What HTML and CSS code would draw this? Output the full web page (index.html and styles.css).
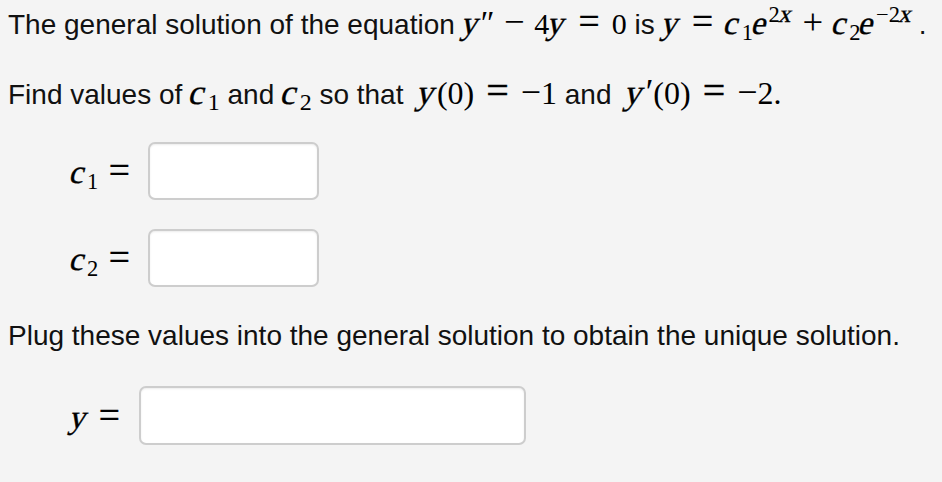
FILE: index.html
```html
<!DOCTYPE html>
<html lang="en">
<head>
<meta charset="utf-8">
<title>Initial value problem</title>
<link rel="stylesheet" href="styles.css">
</head>
<body>
<div class="page">
  <p class="txt l1">The general solution of the equation <span class="m"><span class="v">y</span><span class="pr">″</span><span class="op">−</span>4<span class="v">y</span><span class="rel">=</span>0</span> is <span class="m"><span class="v">y</span><span class="rel">=</span><span class="v">c</span><sub>1</sub><span class="v">e</span><sup>2<span class="v">x</span></sup><span class="op">+</span><span class="v">c</span><sub>2</sub><span class="v">e</span><sup>−2<span class="v">x</span></sup></span>&#8201;.</p>
  <p class="txt l2">Find values of <span class="m m2"><span class="v">c</span><sub>1</sub></span> and <span class="m m2"><span class="v">c</span><sub>2</sub></span> so that <span class="m m2 mx"><span class="v">y</span>(0)<span class="rel">=</span><span class="neg">−</span>1</span> and <span class="m m2 mx"><span class="v">y</span><span class="pr">′</span>(0)<span class="rel">=</span><span class="neg">−</span>2.</span></p>
  <div class="row r1"><span class="lbl m"><span class="v">c</span><sub>1</sub><span class="rel last">=</span></span><input class="ans" type="text" aria-label="c1"></div>
  <div class="row r2"><span class="lbl m"><span class="v">c</span><sub>2</sub><span class="rel last">=</span></span><input class="ans" type="text" aria-label="c2"></div>
  <p class="txt l3">Plug these values into the general solution to obtain the unique solution.</p>
  <div class="row r3"><span class="lbl m"><span class="v">y</span><span class="rel last">=</span></span><input class="ans wide" type="text" aria-label="y"></div>
</div>
</body>
</html>
```

FILE: styles.css
```css
html, body {
  margin: 0;
  background: #f4f4f4;
}
body {
  color: #111;
  font-family: "Liberation Sans", Arial, sans-serif;
  font-size: 28px;
}
.page {
  padding: 5px 0 0 8px;
}
.txt {
  margin: 0;
  line-height: 40px;
  white-space: nowrap;
}
.l2 {
  margin-top: 30px;
}
.l3 {
  margin-top: 29px;
}
.m {
  font-family: "Liberation Serif", "Times New Roman", serif;
  font-size: 30px;
  line-height: 0;
  color: #000;
}
.m2 {
  font-size: 32px;
}
.mx {
  margin-left: 7px;
}
.v {
  display: inline-block;
  font-family: "Liberation Serif", "Times New Roman", serif;
  font-style: normal;
  font-size: 1.1em;
  line-height: 0;
  transform: skewX(-14deg);
  -webkit-text-stroke: 0.35px #000;
  margin-right: 0.03em;
}
.pr {
  font-size: 1.1em;
  margin-left: 0.02em;
}
sub, sup {
  font-size: 75%;
  line-height: 0;
}
sub {
  vertical-align: -0.25em;
  margin-left: 0.04em;
}
sup {
  vertical-align: 0.55em;
}
.op {
  font-size: 1.22em;
  margin: 0 0.26em;
}
.neg {
  font-size: 1.12em;
}
.rel {
  font-size: 1.25em;
  margin: 0 0.32em;
  -webkit-text-stroke: 0.4px #000;
}
.m2 .rel {
  margin: 0 0.3em;
}
.rel.last {
  margin-right: 0;
}
.row {
  display: flex;
  align-items: center;
  gap: 18px;
}
.lbl {
  width: 122px;
  line-height: 1;
  text-align: right;
  white-space: nowrap;
}
.r1 {
  margin-top: 27px;
}
.r2 {
  margin-top: 29px;
}
.r3 {
  margin-top: 30px;
  gap: 19px;
}
.r3 .lbl {
  width: 112px;
}
.lbl .rel {
  margin-left: 0.28em;
}
.ans {
  display: block;
  width: 171px;
  height: 58px;
  box-sizing: border-box;
  margin: 0;
  padding: 0 8px;
  border: 2px solid #cdcdcd;
  border-radius: 7px;
  background: #fff;
  box-shadow: inset 0 1px 2px rgba(0, 0, 0, 0.08);
  font: inherit;
  outline: none;
}
.ans.wide {
  width: 387px;
  height: 59px;
}
```
